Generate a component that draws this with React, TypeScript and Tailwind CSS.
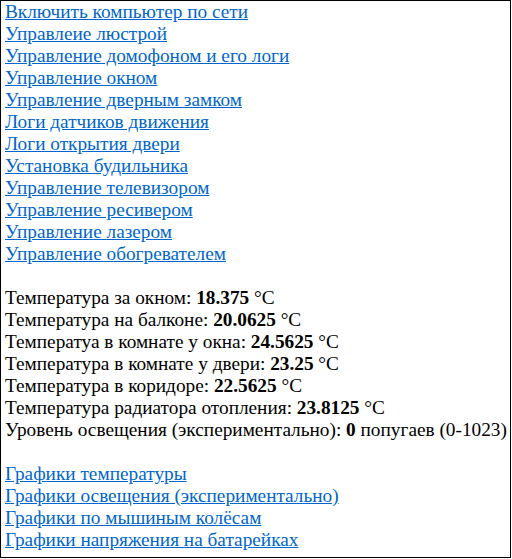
import React from 'react';

const controls = [
  'Включить компьютер по сети',
  'Управлеие люстрой',
  'Управление домофоном и его логи',
  'Управление окном',
  'Управление дверным замком',
  'Логи датчиков движения',
  'Логи открытия двери',
  'Установка будильника',
  'Управление телевизором',
  'Управление ресивером',
  'Управление лазером',
  'Управление обогревателем',
];

const temps: [string, string][] = [
  ['Температура за окном: ', '18.375'],
  ['Температура на балконе: ', '20.0625'],
  ['Температуа в комнате у окна: ', '24.5625'],
  ['Температура в комнате у двери: ', '23.25'],
  ['Температура в коридоре: ', '22.5625'],
  ['Температура радиатора отопления: ', '23.8125'],
];

const charts = [
  'Графики температуры',
  'Графики освещения (экспериментально)',
  'Графики по мышиным колёсам',
  'Графики напряжения на батарейках',
];

const Link: React.FC<{ text: string }> = ({ text }) => (
  <div>
    <a href="#" className="text-[#0066cc] underline">{text}</a>
  </div>
);

export default function App() {
  return (
    <div className="w-[511px] h-[558px] border border-black bg-white pl-[4px] pt-0 font-['Liberation_Serif',serif] text-[19.3px] leading-[22px] text-black whitespace-nowrap">
      {controls.map(c => <Link key={c} text={c} />)}
      <div className="h-[22px]"></div>
      {temps.map(([label, val]) => (
        <div key={label}>
          {label}<b>{val}</b> °C
        </div>
      ))}
      <div>Уровень освещения (экспериментально): <b>0</b> попугаев (0-1023)</div>
      <div className="h-[22px]"></div>
      {charts.map(c => <Link key={c} text={c} />)}
    </div>
  );
}
